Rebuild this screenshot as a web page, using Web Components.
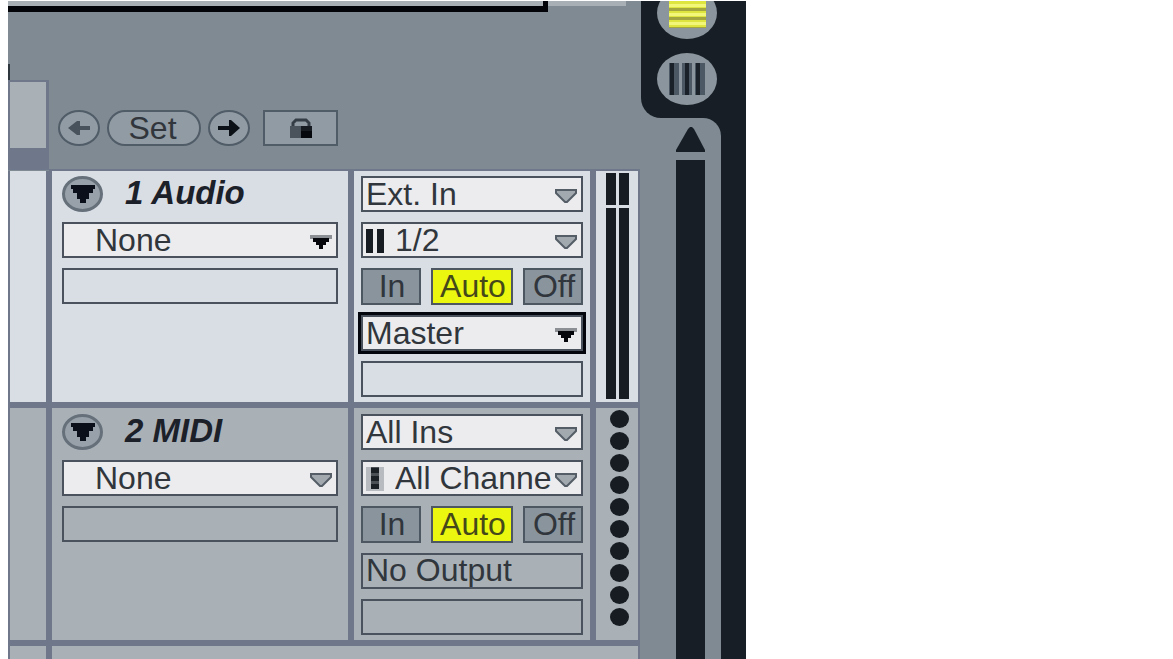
<!DOCTYPE html>
<html lang="en">
<head>
<meta charset="utf-8">
<title>Set – track view</title>
<style>
  body { margin: 0; padding: 1px 8px 0; background: #fff; overflow: hidden; font-family: "Liberation Sans", Arial, sans-serif; font-size: 32px; line-height: 32px; color: #30363c; }
</style>
</head>
<body>
<live-window>
  <set-header slot="header"></set-header>
  <live-track tone="light" label="1 Audio">
    <drop-field slot="device" name="Device chain" value="None" tone="solid" indent></drop-field>
    <drop-field slot="io" name="Input type" value="Ext. In"></drop-field>
    <drop-field slot="io" name="Input channel" value="1/2" icon="stereo"></drop-field>
    <monitor-switch slot="io"></monitor-switch>
    <drop-field slot="io" name="Output type" value="Master" tone="solid" focused></drop-field>
    <text-slot slot="io" name="Output channel"></text-slot>
    <level-meter slot="meter"></level-meter>
  </live-track>
  <live-track tone="dim" label="2 MIDI">
    <drop-field slot="device" name="Device chain" value="None" indent></drop-field>
    <drop-field slot="io" name="Input type" value="All Ins"></drop-field>
    <drop-field slot="io" name="Input channel" value="All Channe" icon="midi"></drop-field>
    <monitor-switch slot="io"></monitor-switch>
    <text-slot slot="io" name="Output type" value="No Output"></text-slot>
    <text-slot slot="io" name="Output channel"></text-slot>
    <midi-dots slot="meter"></midi-dots>
  </live-track>
  <view-rail slot="rail"></view-rail>
</live-window>

<script>
const make = (tag, html) => customElements.define(tag, class extends HTMLElement {
  connectedCallback() {
    if (this.shadowRoot) return;
    const root = this.attachShadow({ mode: 'open' });
    root.innerHTML = '<style>*{box-sizing:border-box}:host{display:block}button,select,input{font:inherit;color:inherit;margin:0}</style>' + html(this);
  }
});

make('live-window', () => `
<style>
  :host { display: flex; width: 100%; max-width: 738px; height: calc(100vh - 1px); overflow: hidden; background: #7f8a93; }
  main { flex: 1; min-width: 0; display: flex; flex-direction: column; }
  .next { flex: 1; display: grid; grid-template-columns: 36px 1fr; gap: 6px; padding: 0 2px; margin-right: 1px; background: #6f788a; }
  .next div { background: #a9b1b7; }
</style>
<main><slot name="header"></slot><slot></slot><div class="next"><div></div><div></div></div></main>
<slot name="rail"></slot>`);

make('set-header', () => `
<style>
  .top { display: flex; height: 11px; align-items: flex-start; }
  .loop { flex: 1; height: 11px; background: #a9b0b5; border: solid #02040a; border-width: 0 5px 6px 0; }
  .rest { width: 78px; height: 5px; margin-right: 15px; background: #a9b0b5; }
  .bar { display: grid; grid-template-columns: 41px 1fr; height: 159px; }
  .edge { padding-top: 52px; }
  .tick { width: 2px; height: 16px; background: #30363d; }
  .cell { height: 90px; border: solid #6f788a; border-width: 2px 3px 22px 2px; background: #a9b1b7; }
  .tools { display: flex; align-items: flex-end; padding: 0 0 23px 9px; border-bottom: 2px solid #6f788a; margin-right: 1px; }
  button { display: grid; place-items: center; height: 36px; padding: 0; border: 2px solid #505c68; background: #919ba3; }
  .round { width: 42px; border-radius: 50%; }
  .set { width: 94px; margin: 0 7px; padding: 0 3px 2px 0; border-radius: 18px; }
  .lock { width: 75px; margin-left: 13px; }
</style>
<div class="top"><div class="loop"></div><div class="rest"></div></div>
<div class="bar">
  <div class="edge"><div class="tick"></div><div class="cell"></div></div>
  <div class="tools">
    <button class="round" aria-label="Previous locator"><svg width="22" height="18" fill="#48525c"><path d="M0 9L9 2H12V7H22V11H12V16H9Z"/></svg></button>
    <button class="set">Set</button>
    <button class="round" aria-label="Next locator"><svg width="22" height="18" fill="#0c1118"><path d="M22 9L13 1H11V7H0V11H11V17H13Z"/></svg></button>
    <button class="lock" aria-label="Lock envelopes"><svg width="24" height="20"><path d="M4 9V5L7 2H17L20 5V9" fill="none" stroke="#343c45" stroke-width="3"/><path d="M1 8H23V20H1Z" fill="#4a535c"/><path d="M12 8H23V20H12Z" fill="#171c23"/><path d="M12 13H23V20H12Z" fill="#05080d"/></svg></button>
  </div>
</div>`);

make('live-track', el => `
<style>
  :host { display: grid; grid-template-columns: 36px 296fr 236fr 42px; gap: 6px; padding: 0 2px 6px; margin-right: 1px; background: #6f788a; --cell: #d9dde4; --pad: 5px; }
  :host([tone="dim"]) { --cell: #a9b1b7; --pad: 6px; }
  section { background: var(--cell); min-width: 0; padding-top: var(--pad); display: flex; flex-direction: column; gap: 10px; }
  .device { padding-left: 10px; padding-right: 10px; }
  .io { padding-left: 7px; padding-right: 7px; padding-bottom: 5px; }
  .name { display: flex; align-items: center; gap: 22px; height: 36px; }
  h2 { margin: 0; padding-bottom: 3px; font-size: 33px; line-height: 32px; font-weight: bold; font-style: italic; color: #1b2029; white-space: nowrap; }
  button { width: 41px; height: 36px; padding: 0; border: 3px solid #65707b; border-radius: 50%; background: #98a1a9; display: grid; place-items: center; }
</style>
<section></section>
<section class="device">
  <div class="name"><button aria-label="Fold track"><svg width="24" height="18"><path d="M0 0H24V4H22V8H18V14H15V18H9V14H6V8H2V4H0Z" fill="#0b0f1a"/></svg></button><h2>${el.getAttribute('label')}</h2></div>
  <slot name="device"></slot>
  <text-slot name="Device parameter"></text-slot>
</section>
<section class="io"><slot name="io"></slot></section>
<section class="meter"><slot name="meter"></slot></section>`);

const icons = {
  stereo: '<svg class="icon" width="18" height="24" fill="#171c22"><path d="M0 0H7V24H0ZM11 0H18V24H11Z"/></svg>',
  midi: '<svg class="icon" width="18" height="24"><path d="M0 0H18V24H0Z" fill="#b8bcc0"/><path d="M5 0H13V22H5Z" fill="#4a5056"/><path d="M5 1H13V6H5ZM5 9H13V14H5ZM5 17H13V22H5Z" fill="#1b2026"/></svg>'
};

make('drop-field', el => `
<style>
  :host { position: relative; height: 36px; }
  select { appearance: none; display: block; width: 100%; height: 36px; padding: 0 26px 2px 3px; border: 2px solid #4a535d; border-radius: 0; background: #ececee; outline: none; }
  :host([indent]) select { padding-left: 31px; }
  :host([icon]) select { padding-left: 32px; }
  :host([focused]) select { outline: 3px solid #04060e; }
  svg { position: absolute; pointer-events: none; }
  .arrow { right: 5px; top: 12px; }
  .icon { left: 5px; top: 7px; }
</style>
<select aria-label="${el.getAttribute('name')}"><option>${el.getAttribute('value')}</option></select>
${icons[el.getAttribute('icon')] || ''}
${el.getAttribute('tone') === 'solid'
  ? '<svg class="arrow" width="24" height="16"><path d="M1 1H23V5H1Z" fill="#8c9094"/><path d="M4 4H20V8H17V11H14V15H10V11H7V8H4Z" fill="#05070c"/></svg>'
  : '<svg class="arrow" width="24" height="16"><path d="M2 2H22V5L13 14H11L2 5Z" fill="#a2a9af" stroke="#555e67" stroke-width="2"/></svg>'}`);

make('text-slot', el => `
<style>
  :host { height: 36px; }
  input { display: block; width: 100%; height: 36px; padding: 0 3px 1px; border: 2px solid #4a535d; border-radius: 0; background: transparent; outline: none; }
</style>
<input readonly aria-label="${el.getAttribute('name')}" value="${el.getAttribute('value') || ''}">`);

make('monitor-switch', () => `
<style>
  :host { display: grid; grid-template-columns: 60fr 82fr 60fr; gap: 10px; height: 37px; }
  button { min-width: 0; height: 37px; padding: 0 0 2px 2px; border: 2px solid #4d5761; background: #8a949c; display: grid; place-items: center; overflow: hidden; }
  .on { background: #ebf70e; color: #45481a; }
</style>
<button>In</button><button class="on" aria-pressed="true">Auto</button><button>Off</button>`);

make('level-meter', () => `
<style>
  :host { display: grid; grid-template: 32px 1fr / 10px 10px; gap: 3px; flex: 1; justify-content: center; margin: -3px 0 3px; }
  i { background: #171c22; }
</style>
<i></i><i></i><i></i><i></i>`);

make('midi-dots', () => `
<style>
  :host { display: flex; flex-direction: column; align-items: center; gap: 4px; margin-top: -4px; padding-left: 4px; }
  i { width: 19px; height: 18px; border-radius: 50%; background: #171c22; }
</style>
${'<i></i>'.repeat(10)}`);

make('view-rail', () => `
<style>
  :host { flex: none; width: 105px; display: flex; flex-direction: column; }
  .tab { display: flex; flex-direction: column; align-items: center; gap: 14px; height: 117px; padding-right: 13px; overflow: hidden; border-bottom-left-radius: 20px; background: #181e25; }
  .tab button { flex: none; width: 60px; height: 52px; padding: 0; border: 0; border-radius: 50%; background: #8b959d; display: grid; place-items: center; }
  .tab button:first-child { margin-top: -14px; }
  .track { flex: 1; background: #181e25; }
  .scroll { width: 80px; height: 100%; padding: 9px 16px 0 35px; border-top-right-radius: 18px; background: #7f8a93; display: flex; flex-direction: column; gap: 8px; }
  .scroll button { padding: 0; border: 0; background: none; height: 25px; display: block; }
  svg { display: block; }
  .thumb { flex: 1; background: #181e25; }
</style>
<div class="tab">
  <button aria-label="Arrangement view"><svg width="37" height="32"><path d="M0 0H37V31H0Z" fill="#a3a63e"/><path d="M0 0H37V11H0ZM0 14H37V20H0ZM0 23H37V30H0Z" fill="#dfe53f"/><path d="M0 7H37V10H0ZM0 16H37V19H0ZM0 25H37V28H0Z" fill="#f2f679"/></svg></button>
  <button aria-label="Session view"><svg width="36" height="32"><path d="M0 0H10V32H0ZM13 0H23V32H13ZM26 0H36V32H26Z" fill="#4c5864"/><path d="M1 0H5V32H1ZM16 0H20V32H16ZM27 0H31V32H27Z" fill="#1a2129"/></svg></button>
</div>
<div class="track"><div class="scroll">
  <button aria-label="Scroll up"><svg width="29" height="25"><path d="M0 25V23L12 2L14 0H16L18 2L29 23V25Z" fill="#181e25"/></svg></button>
  <div class="thumb"></div>
</div></div>`);
</script>
</body>
</html>
